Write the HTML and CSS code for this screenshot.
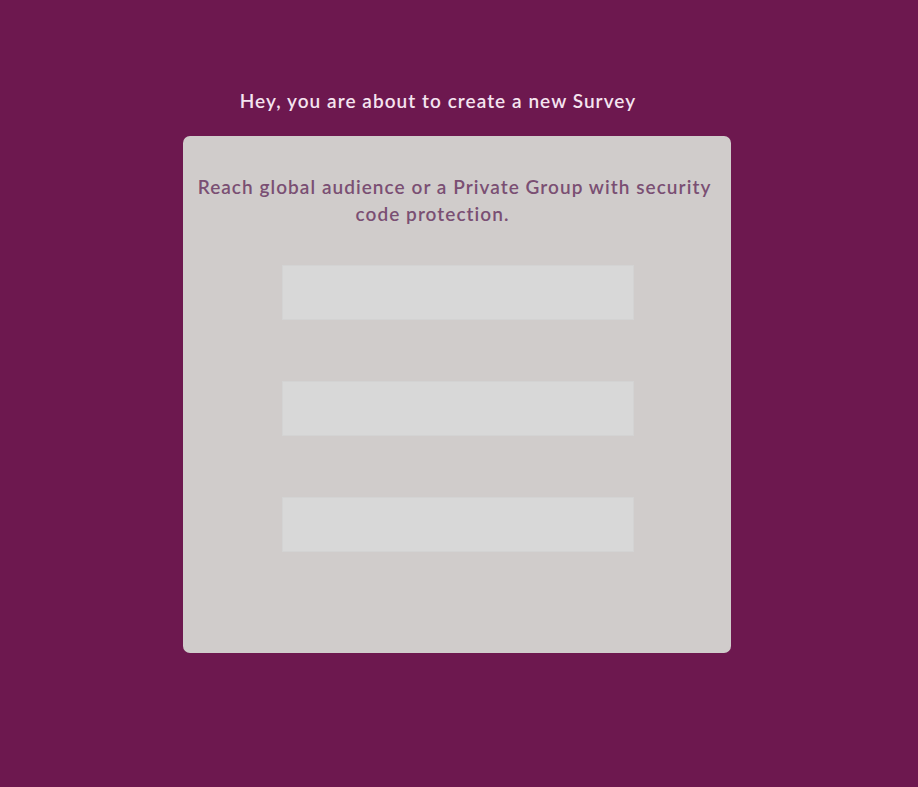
FILE: index.html
```html
<!DOCTYPE html>
<html>
<head>
<meta charset="utf-8">
<link rel="stylesheet" href="styles.css">
</head>
<body>
<main class="page">
  <h1 class="title">Hey, you are about to create a new Survey</h1>
  <section class="card">
    <p class="lead">Reach global audience or a Private Group with security<br><span class="lead-tail">code protection.</span></p>
    <div class="fields">
      <div class="field"></div>
      <div class="field"></div>
      <div class="field"></div>
    </div>
  </section>
</main>
</body>
</html>
```

FILE: styles.css
```css
html, body {
  margin: 0;
  padding: 0;
  background: #6d184f;
  height: 100%;
}
body {
  font-family: Lato, "Open Sans", sans-serif;
}
.page {
  display: flex;
  flex-direction: column;
  align-items: center;
  padding-top: 88px;
}
.title {
  margin: 0 0 0 -42px;
  font-size: 19px;
  font-weight: 600;
  color: #f5e4f0;
  line-height: 26px;
  letter-spacing: 1.05px;
}
.card {
  margin: 22px 0 0 -4px;
  width: 548px;
  height: 517px;
  box-sizing: border-box;
  background: #d0cccb;
  border-radius: 7px;
  padding: 37px 10px 0 5px;
}
.lead {
  margin: 0;
  text-align: center;
  font-size: 19px;
  font-weight: 600;
  line-height: 27px;
  color: #7a4f73;
  letter-spacing: 1.05px;
  white-space: nowrap;
}
.lead-tail {
  display: inline-block;
  padding-right: 44px;
}
.fields {
  display: flex;
  flex-direction: column;
  align-items: center;
  gap: 61px;
  margin-top: 38px;
  padding-left: 6px;
}
.field {
  width: 352px;
  height: 55px;
  box-sizing: border-box;
  background: #d8d8d8;
  border: 1px solid #d3d3d3;
}
```
